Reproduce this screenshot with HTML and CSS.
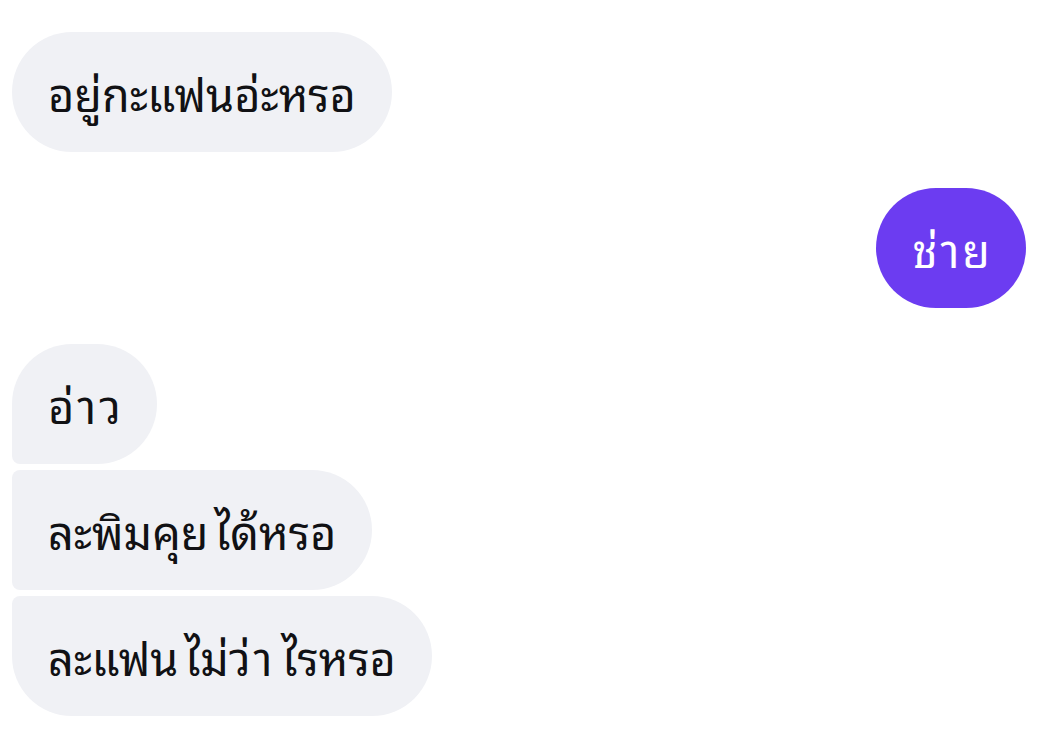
FILE: index.html
```html
<!DOCTYPE html>
<html lang="th">
<head>
<meta charset="utf-8">
<link rel="stylesheet" href="styles.css">
</head>
<body>
<div class="chat">
  <div class="group in">
    <div class="bubble single">อยู่กะแฟนอ่ะหรอ</div>
  </div>
  <div class="group out">
    <div class="bubble single">ช่<span class="aa">า</span>ย</div>
  </div>
  <div class="group in">
    <div class="bubble first">อ่<span class="aa">า</span>ว</div>
    <div class="bubble middle">ละพิมคุย<span class="ai">ไ</span>ด้หรอ</div>
    <div class="bubble last">ละแฟน<span class="ai">ไ</span>ม่ว่<span class="aa">า</span><span class="ai">ไ</span>รหรอ</div>
  </div>
</div>
</body>
</html>
```
FILE: styles.css
```css
html, body {
  margin: 0;
  padding: 0;
  background: #ffffff;
}
.chat {
  width: 1050px;
  height: 743px;
  box-sizing: border-box;
  padding: 32px 24px 0 12px;
  display: flex;
  flex-direction: column;
  gap: 36px;
  font-family: "Noto Sans Thai Looped", "Noto Sans", sans-serif;
}
.group {
  display: flex;
  flex-direction: column;
  gap: 6px;
}
.group.in { align-items: flex-start; }
.group.out { align-items: flex-end; }
.bubble {
  height: 120px;
  box-sizing: border-box;
  padding: 0 36px;
  display: flex;
  align-items: center;
  font-size: 45px;
  color: #111114;
  background: #f0f1f5;
  border-radius: 60px;
  white-space: nowrap;
}
.aa { margin: 0 3px; }
.ai { margin-left: 6px; }
.out .bubble {
  background: #6c3cf1;
  color: #ffffff;
}
.in .bubble.first { border-bottom-left-radius: 8px; }
.in .bubble.middle { border-top-left-radius: 8px; border-bottom-left-radius: 8px; }
.in .bubble.last { border-top-left-radius: 8px; }
```
